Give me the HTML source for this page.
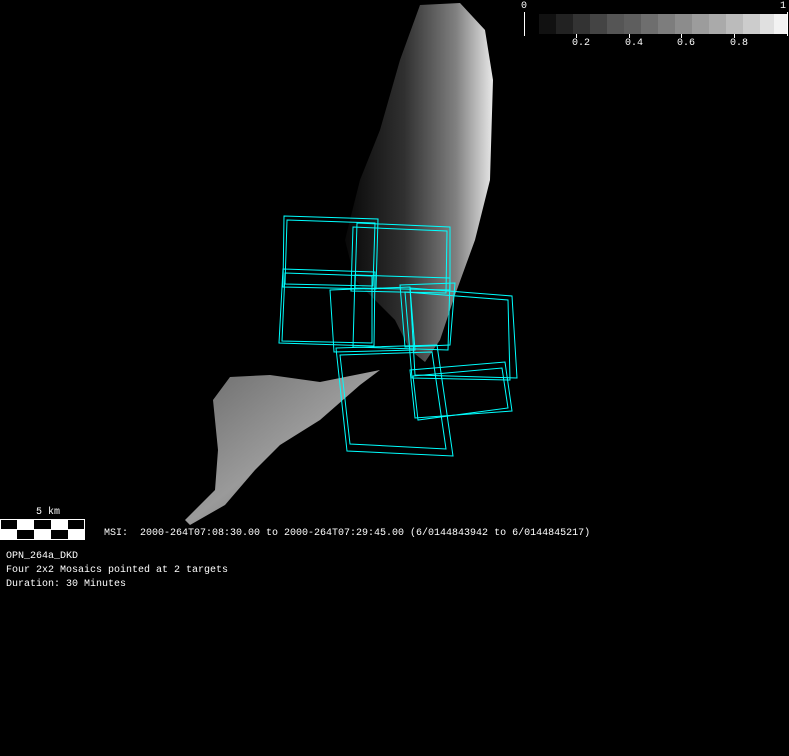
<!DOCTYPE html>
<html><head><style>
html,body{margin:0;padding:0;background:#000;width:789px;height:756px;overflow:hidden}
.t{position:absolute;color:#fff;font-family:"Liberation Mono",monospace;font-size:10px;line-height:14px;white-space:pre}
</style></head><body>
<svg width="789" height="756" style="position:absolute;left:0;top:0">
<defs>
<linearGradient id="g1" x1="0" y1="0" x2="1" y2="0">
<stop offset="0" stop-color="#080808"/><stop offset="0.4" stop-color="#303030"/><stop offset="0.75" stop-color="#808080"/><stop offset="1" stop-color="#e8e8e8"/>
</linearGradient>
<linearGradient id="g2" x1="0" y1="0" x2="1" y2="1">
<stop offset="0" stop-color="#6a6a6a"/><stop offset="0.5" stop-color="#9a9a9a"/><stop offset="1" stop-color="#555"/>
</linearGradient>
</defs>
<polygon fill="url(#g1)" points="420,5 460,3 485,30 493,80 490,180 475,240 455,295 440,340 425,362 410,350 395,320 355,280 345,240 360,180 380,130 400,60"/>
<polygon fill="url(#g2)" points="230,377 270,375 320,382 380,370 360,385 320,420 280,445 255,470 225,505 190,525 185,520 215,490 218,450 213,400"/>
<g fill="none" stroke="#00ffff" stroke-width="1">
<polygon points="284,216 378,219 376,289 283,287"/>
<polygon points="287,220 375,223 373,286 285,284"/>
<polygon points="357,223 450,227 450,290 355,288"/>
<polygon points="353,227 447,231 446,293 351,291"/>
<polygon points="283,269 375,272 374,346 279,343"/>
<polygon points="285,273 372,276 372,343 282,341"/>
<polygon points="355,275 450,278 448,350 353,347"/>
<polygon points="330,290 410,287 415,350 334,352"/>
<polygon points="400,285 455,283 450,345 405,347"/>
<polygon points="336,348 437,345 453,456 347,451"/>
<polygon points="340,355 432,352 446,449 350,444"/>
<polygon points="410,288 512,296 517,378 415,375"/>
<polygon points="405,292 508,300 510,380 412,378"/>
<polygon points="410,370 505,362 512,411 415,418"/>
<polygon points="413,376 502,368 508,408 418,420"/>
</g>
<g>
<rect x="539" y="14" width="17" height="20" fill="#111"/><rect x="556" y="14" width="17" height="20" fill="#222"/>
<rect x="573" y="14" width="17" height="20" fill="#333"/><rect x="590" y="14" width="17" height="20" fill="#444"/>
<rect x="607" y="14" width="17" height="20" fill="#555"/><rect x="624" y="14" width="17" height="20" fill="#5e5e5e"/>
<rect x="641" y="14" width="17" height="20" fill="#6e6e6e"/><rect x="658" y="14" width="17" height="20" fill="#7d7d7d"/>
<rect x="675" y="14" width="17" height="20" fill="#8c8c8c"/><rect x="692" y="14" width="17" height="20" fill="#9c9c9c"/>
<rect x="709" y="14" width="17" height="20" fill="#aaa"/><rect x="726" y="14" width="17" height="20" fill="#bbb"/>
<rect x="743" y="14" width="17" height="20" fill="#ccc"/><rect x="760" y="14" width="14" height="20" fill="#e0e0e0"/>
<rect x="774" y="14" width="14" height="20" fill="#f2f2f2"/>
<rect x="524" y="12" width="1" height="24" fill="#fff"/>
<rect x="787" y="12" width="1" height="24" fill="#fff"/>
<rect x="576" y="34" width="1" height="4" fill="#fff"/><rect x="629" y="34" width="1" height="4" fill="#fff"/>
<rect x="681" y="34" width="1" height="4" fill="#fff"/><rect x="734" y="34" width="1" height="4" fill="#fff"/>
</g>
<rect x="0" y="519" width="85" height="21" fill="#fff"/>
<rect x="1" y="520" width="16" height="9" fill="#000"/><rect x="34" y="520" width="17" height="9" fill="#000"/><rect x="68" y="520" width="16" height="9" fill="#000"/>
<rect x="17" y="530" width="17" height="9" fill="#000"/><rect x="51" y="530" width="17" height="9" fill="#000"/>
</svg>
<div class="t" style="left:521px;top:0px">0</div>
<div class="t" style="left:780px;top:0px">1</div>
<div class="t" style="left:572px;top:37px">0.2</div>
<div class="t" style="left:625px;top:37px">0.4</div>
<div class="t" style="left:677px;top:37px">0.6</div>
<div class="t" style="left:730px;top:37px">0.8</div>
<div class="t" style="left:36px;top:506px">5 km</div>
<div class="t" style="left:104px;top:527px">MSI:  2000-264T07:08:30.00 to 2000-264T07:29:45.00 (6/0144843942 to 6/0144845217)</div>
<div class="t" style="left:6px;top:550px">OPN_264a_DKD
Four 2x2 Mosaics pointed at 2 targets
Duration: 30 Minutes</div>
</body></html>
